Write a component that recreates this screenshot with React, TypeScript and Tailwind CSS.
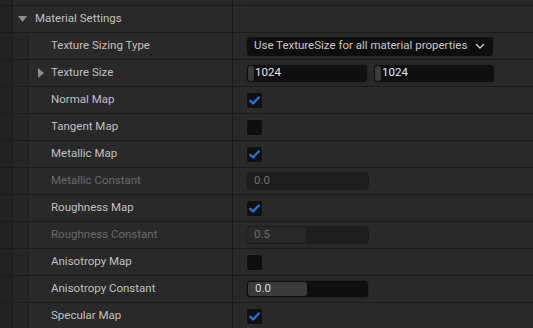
import React from 'react';

const font = { fontFamily: 'Roboto, "Liberation Sans", sans-serif' };

function Check({ on }: { on: boolean }) {
  return (
    <div className="flex h-[17px] w-[17px] items-center justify-center rounded-[3px] border border-[#2c2c2c] bg-[#0f0f0f]">
      {on && (
        <svg width="11" height="9" viewBox="0 0 11 9">
          <path d="M1.2 4.8 L4 7.4 L9.8 1.4" fill="none" stroke="#1b7ae0" strokeWidth="2.2" strokeLinecap="round" strokeLinejoin="round" />
        </svg>
      )}
    </div>
  );
}

function NumField({ value, dim, slider, muted }: { value: string; dim?: boolean; slider?: boolean; muted?: boolean }) {
  return (
    <div
      className={`relative flex h-[18px] w-[123px] items-center rounded-[4px] ${dim ? 'bg-[#1e1e1e]' : 'border border-[#222] bg-[#0f0f0f]'}`}
    >
      {slider && (
        <div className={`absolute left-[1px] top-[1px] bottom-[1px] w-[59px] rounded-[3px] ${muted ? 'bg-[#282828]' : 'bg-[#3a3a3a]'}`} />
      )}
      <span className={`relative pl-[8px] text-[11.5px] ${muted || dim ? 'text-[#6e6e6e]' : 'text-[#d8d8d8]'}`}>{value}</span>
    </div>
  );
}

function SizeField({ value }: { value: string }) {
  return (
    <div className="flex h-[19px] w-[122px] items-center rounded-[4px] border border-[#262626] bg-[#0f0f0f] pl-[1px]">
      <div className="h-[15px] w-[6px] rounded-[3px] bg-[#3a3a3a]" />
      <span className="pl-[1px] text-[11.5px] text-[#e6e6e6]">{value}</span>
    </div>
  );
}

type Row = { label: string; disabled?: boolean; expander?: boolean; value: React.ReactNode };

const rows: Row[] = [
  {
    label: 'Texture Sizing Type',
    value: (
      <div className="flex h-[21px] w-[248px] items-center justify-between rounded-[4px] border border-[#262626] bg-[#0f0f0f] pl-[7px] pr-[8px]">
        <span className="whitespace-nowrap text-[11.5px] text-[#c8c8c8]">Use TextureSize for all material properties</span>
        <svg width="10" height="6" viewBox="0 0 10 6">
          <path d="M1 1 L5 5 L9 1" fill="none" stroke="#c8c8c8" strokeWidth="1.4" />
        </svg>
      </div>
    ),
  },
  {
    label: 'Texture Size',
    expander: true,
    value: (
      <div className="flex gap-[5px]">
        <SizeField value="1024" />
        <SizeField value="1024" />
      </div>
    ),
  },
  { label: 'Normal Map', value: <Check on /> },
  { label: 'Tangent Map', value: <Check on={false} /> },
  { label: 'Metallic Map', value: <Check on /> },
  { label: 'Metallic Constant', disabled: true, value: <NumField value="0.0" dim /> },
  { label: 'Roughness Map', value: <Check on /> },
  { label: 'Roughness Constant', disabled: true, value: <NumField value="0.5" slider muted dim /> },
  { label: 'Anisotropy Map', value: <Check on={false} /> },
  { label: 'Anisotropy Constant', value: <NumField value="0.0" slider /> },
  { label: 'Specular Map', value: <Check on /> },
];

export default function App() {
  return (
    <div className="h-[328px] w-[533px] overflow-hidden bg-[#242424]" style={font}>
      <div className="-mt-[21px]">
        {/* row cut off at the top */}
        <div className="flex h-[27px] border-b border-[#1b1b1b]">
          <div className="w-[13px] border-r border-[#1b1b1b] bg-[#222]" />
          <div className="w-[220px] border-r border-[#1b1b1b] bg-[#292929]" />
          <div className="flex flex-1 items-center bg-[#292929] pl-[13px]">
            <Check on={false} />
          </div>
        </div>

        {/* category header */}
        <div className="flex h-[27px] border-b border-[#1b1b1b]">
          <div className="w-[13px] border-r border-[#1b1b1b] bg-[#222]" />
          <div className="flex w-[220px] items-center border-r border-[#1b1b1b] bg-[#292929]">
            <svg width="9" height="6" viewBox="0 0 9 6" className="ml-[5px]">
              <path d="M0 0 H9 L4.5 6 Z" fill="#8c8c8c" />
            </svg>
            <span className="ml-[8px] text-[11.5px] text-[#c0c0c0]">Material Settings</span>
          </div>
          <div className="flex-1 bg-[#292929]" />
        </div>

        {rows.map((r) => (
          <div key={r.label} className="flex h-[27px] border-b border-[#1b1b1b]">
            <div className="w-[13px] border-r border-[#1b1b1b] bg-[#222]" />
            <div className="w-[16px] border-r border-[#1e1e1e] bg-[#262626]" />
            <div className="flex w-[204px] items-center border-r border-[#1b1b1b] bg-[#292929]">
              <div className="flex w-[22px] justify-center pl-[1px]">
                {r.expander && (
                  <svg width="6" height="10" viewBox="0 0 6 10">
                    <path d="M0 0 L6 5 L0 10 Z" fill="#8c8c8c" />
                  </svg>
                )}
              </div>
              <span className={`text-[11.5px] ${r.disabled ? 'text-[#6a6a6a]' : 'text-[#c0c0c0]'}`}>{r.label}</span>
            </div>
            <div className="flex flex-1 items-center bg-[#292929] pl-[13px]">{r.value}</div>
          </div>
        ))}
      </div>
    </div>
  );
}
